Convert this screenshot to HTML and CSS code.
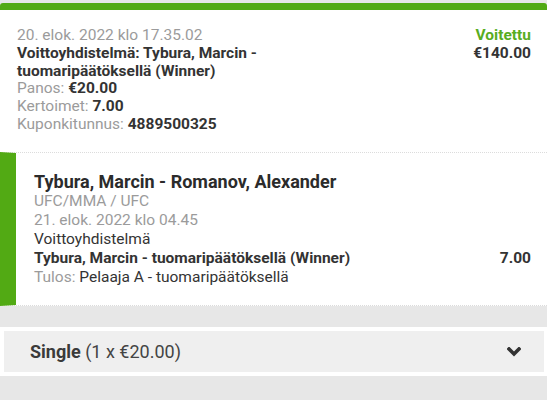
FILE: index.html
```html
<!DOCTYPE html>
<html lang="fi">
<head>
<meta charset="utf-8">
<link rel="stylesheet" href="styles.css">
</head>
<body>
<div class="page">
  <div class="card">
    <div class="summary">
      <div class="info">
        <div class="muted">20. elok. 2022 klo 17.35.02</div>
        <div class="strong">Voittoyhdistelmä: Tybura, Marcin -<br>tuomaripäätöksellä (Winner)</div>
        <div><span class="muted">Panos:</span> <span class="strong">€20.00</span></div>
        <div><span class="muted">Kertoimet:</span> <span class="strong">7.00</span></div>
        <div><span class="muted">Kuponkitunnus:</span> <span class="strong">4889500325</span></div>
      </div>
      <div class="result">
        <div class="won">Voitettu</div>
        <div class="strong">€140.00</div>
      </div>
    </div>
    <div class="selection">
      <div class="event">Tybura, Marcin - Romanov, Alexander</div>
      <div class="muted">UFC/MMA / UFC</div>
      <div class="muted">21. elok. 2022 klo 04.45</div>
      <div class="dark">Voittoyhdistelmä</div>
      <div class="pick"><span class="strong">Tybura, Marcin - tuomaripäätöksellä (Winner)</span><span class="strong">7.00</span></div>
      <div><span class="muted">Tulos:</span> <span class="dark">Pelaaja A - tuomaripäätöksellä</span></div>
    </div>
  </div>
  <div class="spacer"></div>
  <div class="system-wrap">
    <div class="system">
      <div class="system-label"><span class="bold">Single</span> (1 x €20.00)</div>
      <svg class="chevron" width="14" height="10" viewBox="0 0 14 10"><polyline points="2,2 7,7 12,2" fill="none" stroke="#333" stroke-width="3.6" stroke-linecap="square" stroke-linejoin="miter"/></svg>
    </div>
  </div>
</div>
</body>
</html>
```
FILE: styles.css
```css
html, body {
  margin: 0;
  padding: 0;
}
body {
  background: #e7e7e7;
  font-family: Roboto, "Liberation Sans", sans-serif;
  font-size: 15.5px;
  color: #333;
}
.page {
  padding-top: 3px;
}
.card {
  background: #fff;
  border-top: 7px solid #52aa14;
  border-radius: 3px 3px 0 0;
}
.summary {
  display: flex;
  justify-content: space-between;
  padding: 17px 16px 18px 17px;
  line-height: 17.8px;
}
.muted {
  color: #9b9b9b;
}
.strong {
  font-weight: 700;
  color: #333;
}
.dark {
  color: #333;
}
.result {
  text-align: right;
}
.won {
  color: #58ad1f;
  font-weight: 700;
}
.selection {
  border-top: 1px dotted #dcdcdc;
  border-bottom: 1px dotted #dcdcdc;
  border-left: 16px solid #52aa14;
  padding: 18px 16px 18px 18px;
  line-height: 19px;
}
.event {
  font-size: 18px;
  font-weight: 700;
  line-height: 21.5px;
  color: #2b2b2b;
}
.pick {
  display: flex;
  justify-content: space-between;
}
.spacer {
  height: 21px;
}
.system-wrap {
  background: #fff;
  padding: 4px 3px 4px 4px;
}
.system {
  background: #efefef;
  height: 41px;
  display: flex;
  align-items: center;
  justify-content: space-between;
  padding: 0 23px 0 26px;
  font-size: 18px;
  color: #444;
}
.bold {
  font-weight: 700;
  color: #3a3a3a;
}
.chevron {
  display: block;
}
```
